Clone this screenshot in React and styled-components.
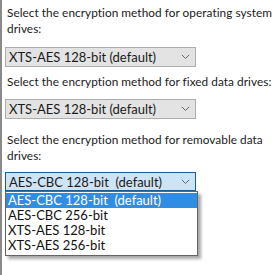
import React from 'react';
import styled, { createGlobalStyle } from 'styled-components';

const GlobalStyle = createGlobalStyle`
  html, body { margin: 0; padding: 0; background: #fff; }
  body { font-family: Lato, 'Noto Sans', sans-serif; }
`;

const Panel = styled.div`
  width: 278px;
  height: 275px;
  box-sizing: border-box;
  border-left: 2px solid #8a8a8a;
  padding: 5px 0 0 3px;
  display: flex;
  flex-direction: column;
  align-items: flex-start;
  color: #1a1a1a;
  overflow: hidden;
`;

const Label = styled.div`
  font-size: 11.8px;
  line-height: 16px;
  padding-left: 2px;
  margin-top: ${p => p.mt || 0}px;
  white-space: nowrap;
  letter-spacing: 0.05px;
`;

const ComboWrap = styled.div`
  position: relative;
  margin-top: ${p => p.mt || 0}px;
`;

const Combo = styled.div`
  width: 191px;
  height: ${p => (p.open ? 19 : 20)}px;
  box-sizing: border-box;
  display: flex;
  align-items: center;
  justify-content: space-between;
  padding: 0 5px 0 3px;
  background: ${p => (p.open ? '#cce4f7' : '#e3e3e3')};
  border: 1px solid ${p => (p.open ? '#1d5d92' : '#adadad')};
  font-size: 13px;
  white-space: pre;
`;

const Chevron = () => (
  <svg width="9" height="6" viewBox="0 0 9 6">
    <path d="M0.8 0.8 L4.5 4.5 L8.2 0.8" fill="none" stroke="#666" strokeWidth="1" />
  </svg>
);

const List = styled.ul`
  position: absolute;
  left: 0;
  top: 19px;
  width: 193px;
  margin: 0;
  padding: 1px 0 2px;
  list-style: none;
  box-sizing: border-box;
  background: #fff;
  border: 1px solid #646464;
  box-shadow: 3px 3px 3px rgba(0, 0, 0, 0.35);
  font-size: 13px;
`;

const Item = styled.li`
  height: 15px;
  line-height: 15px;
  padding-left: 2px;
  white-space: pre;
  background: ${p => (p.active ? '#2f8de4' : 'transparent')};
  color: ${p => (p.active ? '#fff' : '#111')};
`;

const options = ['AES-CBC 128-bit  (default)', 'AES-CBC 256-bit', 'XTS-AES 128-bit', 'XTS-AES 256-bit'];

export default function App() {
  return (
    <>
      <GlobalStyle />
      <Panel>
        <Label>
          Select the encryption method for operating system
          <br />
          drives:
        </Label>
        <ComboWrap mt={10}>
          <Combo>
            <span>XTS-AES 128-bit (default)</span>
            <Chevron />
          </Combo>
        </ComboWrap>
        <Label mt={7}>Select the encryption method for fixed data drives:</Label>
        <ComboWrap mt={9}>
          <Combo>
            <span>XTS-AES 128-bit (default)</span>
            <Chevron />
          </Combo>
        </ComboWrap>
        <Label mt={13}>
          Select the encryption method for removable data
          <br />
          drives:
        </Label>
        <ComboWrap mt={8}>
          <Combo open>
            <span>AES-CBC 128-bit  (default)</span>
            <Chevron />
          </Combo>
          <List>
            {options.map((o, i) => (
              <Item key={o} active={i === 0}>
                {o}
              </Item>
            ))}
          </List>
        </ComboWrap>
      </Panel>
    </>
  );
}
